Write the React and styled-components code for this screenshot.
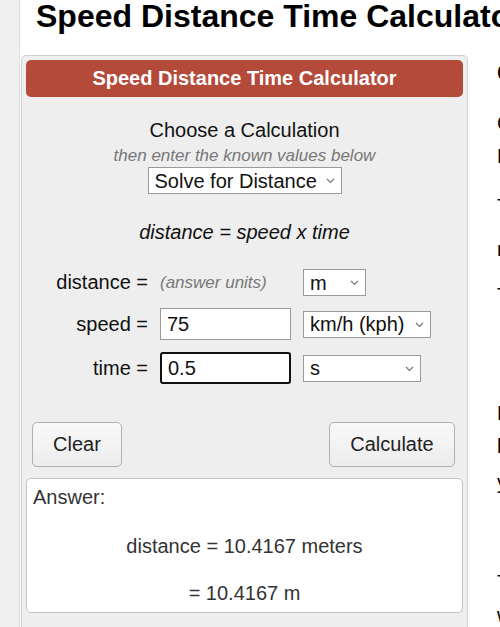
import React from 'react'
import styled, { createGlobalStyle } from 'styled-components'

const GlobalStyle = createGlobalStyle`
  html, body {
    margin: 0;
    padding: 0;
    background: #fff;
    font-family: "Liberation Sans", Arial, sans-serif;
    color: #000;
  }
`

const Page = styled.div`
  display: flex;
  width: 500px;
  height: 627px;
  overflow: hidden;
`
const Gutter = styled.div`
  flex: 0 0 19px;
  background: #f0f0f0;
  border-right: 1px solid #dedede;
`
const Main = styled.div`
  flex: 1 0 auto;
  padding-left: 1px;
`
const Title = styled.h1`
  margin: 0 0 23px 15px;
  font-size: 32px;
  line-height: 32px;
  font-weight: bold;
  white-space: nowrap;
`
const Columns = styled.div`
  display: flex;
  align-items: flex-start;
`
const Panel = styled.div`
  flex: 0 0 447px;
  box-sizing: border-box;
  height: 620px;
  padding: 4px;
  background: #eeeeee;
  border: 1px solid #cfcfcf;
  border-radius: 5px;
  display: flex;
  flex-direction: column;
  align-items: center;
`
const PanelHeader = styled.div`
  align-self: stretch;
  height: 37px;
  background: #b44a3a;
  border-radius: 5px;
  color: #fff;
  font-size: 20px;
  font-weight: bold;
  display: flex;
  align-items: center;
  justify-content: center;
`
const Choose = styled.div`
  margin-top: 21px;
  font-size: 20px;
  line-height: 24px;
  color: #111;
`
const Hint = styled.div`
  margin-top: 4px;
  font-size: 17px;
  line-height: 20px;
  font-style: italic;
  color: #777;
`
const Formula = styled.div`
  margin-top: 26px;
  font-size: 20px;
  line-height: 24px;
  font-style: italic;
  color: #111;
`
const SelectWrap = styled.div`
  position: relative;
  width: ${({ w }) => w}px;
  margin-top: ${({ mt }) => mt || 0}px;
`
const Select = styled.select`
  appearance: none;
  -webkit-appearance: none;
  box-sizing: border-box;
  width: 100%;
  height: 27px;
  padding: 0 0 0 6px;
  border: 1px solid #9a9a9a;
  border-radius: 0;
  background: #fff;
  font-family: "Liberation Sans", Arial, sans-serif;
  font-size: 20px;
  color: #111;
`
const Chevron = styled.svg`
  position: absolute;
  right: 7px;
  top: 11px;
  pointer-events: none;
`
const Grid = styled.div`
  margin-top: 25px;
  align-self: stretch;
  display: grid;
  grid-template-columns: 122px 131px auto;
  column-gap: 12px;
  row-gap: 12px;
  align-items: center;
`
const Label = styled.div`
  text-align: right;
  font-size: 20px;
  color: #111;
  white-space: nowrap;
`
const Units = styled.div`
  font-size: 17px;
  font-style: italic;
  color: #777;
  white-space: nowrap;
`
const Input = styled.input`
  box-sizing: border-box;
  width: 131px;
  height: 32px;
  padding: 0 6px;
  font-family: "Liberation Sans", Arial, sans-serif;
  font-size: 20px;
  color: #111;
  background: #fff;
  border: ${({ focused }) => (focused ? '2px solid #111' : '1px solid #9a9a9a')};
  border-radius: ${({ focused }) => (focused ? '3px' : '0')};
  outline: none;
`
const Buttons = styled.div`
  align-self: stretch;
  margin-top: 38px;
  padding: 0 8px 0 6px;
  display: flex;
  justify-content: space-between;
`
const Button = styled.button`
  box-sizing: border-box;
  height: 45px;
  width: ${({ w }) => w}px;
  border: 1px solid #b0b0b0;
  border-radius: 5px;
  background: linear-gradient(#f9f9f9, #ececec);
  font-family: "Liberation Sans", Arial, sans-serif;
  font-size: 20px;
  color: #222;
`
const Answer = styled.div`
  align-self: stretch;
  box-sizing: border-box;
  margin-top: 11px;
  height: 135px;
  padding: 6px 6px 0;
  background: #fff;
  border: 1px solid #c4c4c4;
  border-radius: 5px;
  font-size: 20px;
  line-height: 24px;
  color: #333;
`
const AnswerLine = styled.div`
  text-align: center;
  margin-top: ${({ mt }) => mt}px;
`
const Aside = styled.div`
  flex: 0 0 320px;
  margin-left: 29px;
  white-space: nowrap;
`
const AsideHeading = styled.h2`
  margin: 3px 0 0;
  font-size: 24px;
  line-height: 30px;
  font-weight: bold;
`
const AsideLine = styled.div`
  margin-top: ${({ mt }) => mt}px;
  font-size: 20px;
  line-height: 33px;
`

const ChevronIcon = () => (
  <Chevron width="9" height="6" viewBox="0 0 9 6">
    <path d="M1 1l3.5 3.5L8 1" fill="none" stroke="#777" strokeWidth="1.2" />
  </Chevron>
)

const UnitSelect = ({ w, mt, value }) => (
  <SelectWrap w={w} mt={mt}>
    <Select defaultValue={value}>
      <option>{value}</option>
    </Select>
    <ChevronIcon />
  </SelectWrap>
)

const App = () => {
  return (
    <Page>
      <GlobalStyle />
      <Gutter />
      <Main>
        <Title>Speed Distance Time Calculator</Title>
        <Columns>
          <Panel>
            <PanelHeader>Speed Distance Time Calculator</PanelHeader>
            <Choose>Choose a Calculation</Choose>
            <Hint>then enter the known values below</Hint>
            <UnitSelect w={194} mt={1} value="Solve for Distance" />
            <Formula>distance = speed x time</Formula>
            <Grid>
              <Label>distance =</Label>
              <Units>(answer units)</Units>
              <UnitSelect w={63} value="m" />
              <Label>speed =</Label>
              <Input defaultValue="75" />
              <UnitSelect w={128} value="km/h (kph)" />
              <Label>time =</Label>
              <Input focused defaultValue="0.5" />
              <UnitSelect w={118} value="s" />
            </Grid>
            <Buttons>
              <Button w={90}>Clear</Button>
              <Button w={126}>Calculate</Button>
            </Buttons>
            <Answer>
              <div>Answer:</div>
              <AnswerLine mt={25}>distance = 10.4167 meters</AnswerLine>
              <AnswerLine mt={23}>= 10.4167 m</AnswerLine>
            </Answer>
          </Panel>
          <Aside>
            <AsideHeading>Calculator Use</AsideHeading>
            <AsideLine mt={19}>Calculate speed, distance or time.</AsideLine>
            <AsideLine mt={0}>Distance is equal to speed times</AsideLine>
            <AsideLine mt={17}>The calculator can solve for</AsideLine>
            <AsideLine mt={10}>rate, distance or time.</AsideLine>
            <AsideLine mt={13}>The rate units are in</AsideLine>
            <AsideLine mt={85}>For example, if you know</AsideLine>
            <AsideLine mt={0}>how far and how long</AsideLine>
            <AsideLine mt={3}>you can calculate speed.</AsideLine>
            <AsideLine mt={67}>The formula</AsideLine>
            <AsideLine mt={0}>where s is speed</AsideLine>
          </Aside>
        </Columns>
      </Main>
    </Page>
  )
}

export default App
